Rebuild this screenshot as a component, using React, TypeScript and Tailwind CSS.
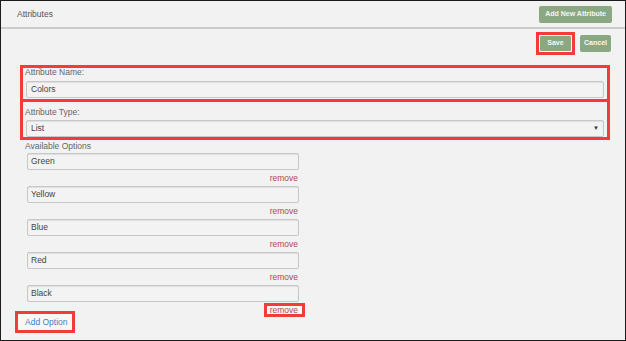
import React from "react";

const options = ["Green", "Yellow", "Blue", "Red", "Black"];

const inputCls =
  "h-[17px] flex items-center rounded-[2px] border border-[#c6c7c6] bg-[#f2f3f2] shadow-[inset_0_1px_1px_rgba(0,0,0,0.08)] text-[8.5px] text-[#444]";

const App = () => {
  return (
    <div
      className="w-[626px] h-[341px] border border-[#1c1c1c] bg-[#f1f2f1] overflow-hidden text-[#555]"
      style={{ fontFamily: '"Liberation Sans", Arial, sans-serif' }}
    >
      {/* header */}
      <div className="h-[28px] border-b-2 border-[#cbcccb] flex items-center justify-between pl-[16px] pr-[13px]">
        <span className="text-[8.5px] text-[#555]">Attributes</span>
        <button className="h-[17px] px-[6px] rounded-[2px] bg-[#8aa982] text-[7px] font-bold text-[#f6f6f6]">
          Add New Attribute
        </button>
      </div>

      {/* save / cancel */}
      <div className="mt-[3px] flex items-center justify-end pr-[14px] gap-[5px]">
        <div className="flex border-[3px] border-[#f33b3b]">
          <button className="h-[17px] w-[33px] rounded-[2px] border border-[#f7f7f7] bg-[#8aa982] text-[7px] font-bold text-[#f6f6f6]">
            Save
          </button>
        </div>
        <button className="h-[17px] w-[31px] rounded-[2px] bg-[#8aa982] text-[7px] font-bold text-[#f6f6f6]">
          Cancel
        </button>
      </div>

      {/* attribute name / type */}
      <div className="mt-[10px] ml-[19px] w-[590px]">
        <div className="border-[3px] border-[#f33b3b] px-[2px] pb-[1px]">
          <div className="text-[8.5px] leading-[9px] text-[#666]">Attribute Name:</div>
          <div className={inputCls + " mt-[4px] mx-[1px] pl-[4px]"}>Colors</div>
        </div>
        <div className="border-[3px] border-t-0 border-[#f33b3b] px-[2px] pt-[5px]">
          <div className="text-[8.5px] leading-[10px] text-[#666]">Attribute Type:</div>
          <div className={inputCls + " mt-[3px] mx-[1px] pl-[4px] pr-[4px] justify-between"}>
            <span>List</span>
            <span className="text-[6px] text-[#333]">▼</span>
          </div>
        </div>
      </div>

      {/* options */}
      <div className="mt-[1px] pl-[24px] text-[8.5px] leading-[10px] text-[#666]">Available Options</div>
      <div className="mt-[2px] ml-[26px] w-[272px]">
        {options.map((o, i) => (
          <div key={o}>
            <div className={inputCls + " pl-[3px]"}>{o}</div>
            <div className="h-[16px] flex items-center justify-end pr-[1px]">
              {i === options.length - 1 ? (
                <span className="mr-[-7px] h-[14px] flex items-center border-[3px] border-[#f33b3b] pl-[3px] pr-[4px] bg-[#f7f7f7] text-[8.5px] text-[#b4474a]">
                  remove
                </span>
              ) : (
                <span className="text-[8.5px] text-[#b4474a]">remove</span>
              )}
            </div>
          </div>
        ))}
      </div>
      <div className="-mt-[7px] ml-[14px] w-[60px] h-[22px] border-[3px] border-[#f33b3b] bg-[#f7f7f7] flex items-center pl-[7px]">
        <span className="text-[8.5px] text-[#3f7fc4]">Add Option</span>
      </div>
    </div>
  );
};

export default App;
